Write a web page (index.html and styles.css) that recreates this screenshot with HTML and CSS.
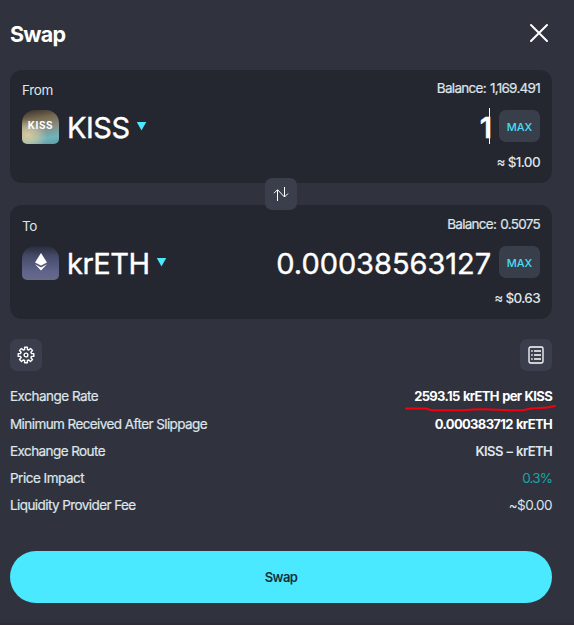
FILE: index.html
```html
<!DOCTYPE html>
<html lang="en">
<head>
<meta charset="utf-8">
<title>Swap</title>
<link rel="stylesheet" href="styles.css">
</head>
<body>
<main class="modal">
  <header class="header">
    <h1 class="title">Swap</h1>
    <svg class="close" width="20" height="20" viewBox="0 0 20 20"><path d="M2 2 18 18M18 2 2 18" stroke="#fff" stroke-width="2" fill="none" stroke-linecap="round"/></svg>
  </header>

  <section class="panel">
    <div class="panel-top"><span class="label from">From</span><span class="balance">Balance: 1,169.491</span></div>
    <div class="panel-main">
      <span class="token token-kiss"><span class="token-name">KISS</span></span>
      <span class="symbol">KISS</span><i class="caret"></i>
      <span class="amount a1">1</span><i class="cursor"></i>
      <button class="max">MAX</button>
    </div>
    <div class="usd">≈ $1.00</div>
    <button class="flip" aria-label="Flip"><svg width="16" height="16" viewBox="0 0 16 16" fill="none" stroke="#fff" stroke-width="1"><path d="M4.500 15V4M1 7.200 4.500 3.700 11.500 11 15 7.500M11.500 11V1"/></svg></button>
  </section>

  <section class="panel second">
    <div class="panel-top"><span class="label">To</span><span class="balance">Balance: 0.5075</span></div>
    <div class="panel-main">
      <span class="token token-eth"><svg width="12" height="18" viewBox="0 0 12 18"><path d="M6 0 12 9.400 6 12.500 0 9.400Z M0 11.200 6 14.400 12 11.200 6 17.600Z" fill="#fff"/></svg></span>
      <span class="symbol">krETH</span><i class="caret"></i>
      <span class="amount a2">0.00038563127</span>
      <button class="max">MAX</button>
    </div>
    <div class="usd">≈ $0.63</div>
  </section>

  <div class="tools">
    <button class="tool" aria-label="Settings"><svg width="18" height="18" viewBox="0 0 18 18" fill="none" stroke="#fff" stroke-width="1.4" stroke-linejoin="round"><path d="M7.6 1.2h2.8v2.3l1.4.6 1.7-1.6 2 2-1.6 1.7.6 1.4h2.3v2.8h-2.3l-.6 1.4 1.6 1.7-2 2-1.7-1.6-1.4.6v2.3H7.6v-2.3l-1.4-.6-1.7 1.6-2-2 1.6-1.7-.6-1.4H1.2V7.6h2.3l.6-1.4-1.6-1.7 2-2 1.7 1.6 1.4-.6Z"/><circle cx="9" cy="9" r="1.9"/></svg></button>
    <button class="tool" aria-label="Details"><svg width="16" height="18" viewBox="0 0 16 18" fill="none" stroke="#fff" stroke-width="1.3"><rect x="1" y="1" width="14" height="16" rx="1.5"/><path d="M3.2 5h1.5M6 5h7M3.2 9h1.5M6 9h7M3.2 13h1.5M6 13h7"/></svg></button>
  </div>

  <dl class="details">
    <div class="row"><dt>Exchange Rate</dt><dd class="strong">2593.15 krETH per KISS<svg class="underline" width="152" height="8" viewBox="0 0 152 8"><path d="M1 3.5H21Q25 5.2 29 5.3H57Q75 3.7 92 4.7T119 5Q126 3.2 134 3Q143 2.8 150 1" fill="none" stroke="#f5000c" stroke-width="2" stroke-linecap="round"/></svg></dd></div>
    <div class="row"><dt class="tight">Minimum Received After Slippage</dt><dd class="strong">0.000383712 krETH</dd></div>
    <div class="row"><dt class="tight">Exchange Route</dt><dd class="route">KISS – krETH</dd></div>
    <div class="row"><dt>Price Impact</dt><dd class="impact">0.3%</dd></div>
    <div class="row"><dt class="tight">Liquidity Provider Fee</dt><dd>~$0.00</dd></div>
  </dl>
  <button class="submit">Swap</button>
</main>
</body>
</html>
```
FILE: styles.css
```css
* { box-sizing: border-box; }
body { margin: 0; background: #30333e; font-family: Inter, "Liberation Sans", sans-serif; font-size: 13.5px; letter-spacing: -0.5px; color: #dfe5ea; }
button { border: 0; padding: 0; font: inherit; letter-spacing: inherit; display: flex; align-items: center; justify-content: center; }
.modal { width: 574px; height: 625px; padding: 20px 22px 0 10px; overflow: hidden; border-bottom: 2px solid #2e2d37; }
.header { height: 50px; display: flex; justify-content: space-between; padding-right: 3px; }
.title { margin: 0; font-size: 21.5px; line-height: 28px; font-weight: 700; letter-spacing: -0.75px; color: #fff; }
.close { margin-top: 3px; }
.panel { position: relative; height: 113px; background: #252730; border-radius: 12px; padding: 10px 12px 0; }
.second { margin-top: 22px; height: 114px; padding-top: 11px; }
.panel-top { display: flex; justify-content: space-between; height: 30px; line-height: 20px; }
.from { letter-spacing: -0.35px; }
.balance { margin-top: -2px; letter-spacing: -0.72px; word-spacing: 1px; -webkit-text-stroke: .2px; }
.panel-main { display: flex; align-items: center; height: 32px; color: #fff; }
.token { width: 37px; height: 34px; margin-top: 2px; margin-right: 8px; border-radius: 13px 13px 5px 5px; display: flex; justify-content: center; align-items: center; flex: none; }
.token-kiss { background: radial-gradient(ellipse at 15% 75%, #d9cba0 0%, #d9cba099 22%, transparent 45%), linear-gradient(170deg, #332e2d 0%, #77694f 27%, #858d84 52%, #70b4bd 80%, #609ba5 100%); }
.token-name { color: #fff; font-size: 10px; font-weight: 700; letter-spacing: .6px; margin-top: -5px; }
.token-eth { background: linear-gradient(#292b39, #444967 28%, #60638a 75%, #686a8a); }
.token-eth svg { margin-top: -2px; }
.symbol { font-size: 29px; line-height: 32px; white-space: nowrap; letter-spacing: -0.5px; margin-top: 4px; -webkit-text-stroke: .4px #fff; }
.caret { width: 10px; height: 9px; margin: 0 0 0 7px; background: #4be8ff; clip-path: polygon(0 0, 100% 0, 50% 100%); }
.amount { margin: 4px 0 0 auto; font-size: 29px; line-height: 32px; letter-spacing: -0.05px; -webkit-text-stroke: .4px #fff; }
.a1 { font-weight: 600; letter-spacing: -3px; }
.cursor { width: 1px; height: 36px; background: #fff; }
.max { width: 41px; height: 32px; border-radius: 7px; background: #393e4b; color: #46dff3; font-size: 11px; letter-spacing: 0; font-weight: 500; margin-left: 9px; padding-top: 1px; }
.a2 + .max { margin-left: 8px; }
.usd { text-align: right; line-height: 20px; margin-top: 10px; font-weight: 500; letter-spacing: -0.65px; }
.flip { position: absolute; left: 255px; top: 108px; width: 32px; height: 32px; border-radius: 7px; background: #3b3f4c; z-index: 1; }
.tools { display: flex; justify-content: space-between; margin-top: 20px; }
.tool { width: 32px; height: 32px; border-radius: 7px; background: #3b3e4c; }
.details { margin: 12px 0 0; }
.row { display: flex; justify-content: space-between; height: 27px; line-height: 26px; }
.row:first-child { height: 28px; }
dt { -webkit-text-stroke: .2px; }
dd { position: relative; margin: 0; }
.tight { letter-spacing: -0.58px; }
.strong { color: #fff; font-size: 13px; font-weight: 700; letter-spacing: -0.66px; word-spacing: .8px; }
.route { font-size: 13px; font-weight: 600; letter-spacing: -0.6px; word-spacing: 1px; }
.impact { color: #14a8aa; letter-spacing: -0.9px; }
.underline { position: absolute; right: -5px; top: 22px; }
.submit { width: 542px; height: 52px; border-radius: 26px; background: #4be9ff; color: #15303d; margin-top: 32px; font-size: 13px; font-weight: 600; letter-spacing: -0.55px; }
```
